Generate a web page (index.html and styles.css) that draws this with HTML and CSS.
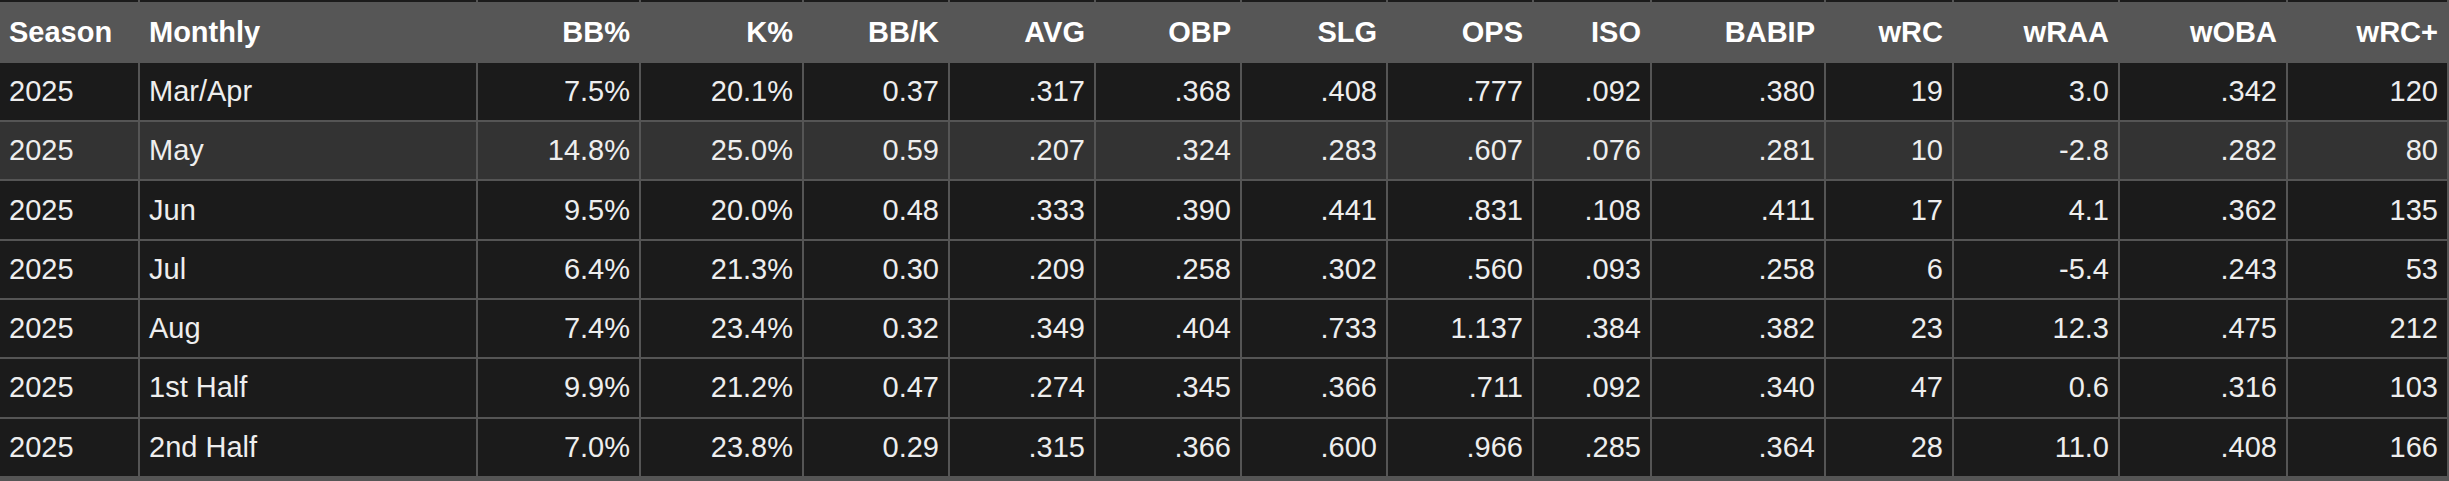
FILE: index.html
```html
<!DOCTYPE html>
<html lang="en">
<head>
    <meta charset="UTF-8">
    <meta name="viewport" content="width=device-width, initial-scale=1.0">
    <title>Monthly Splits</title>
    <link rel="stylesheet" href="styles.css">
</head>
<body>
    <div class="wrap">
        <table class="splits">
            <colgroup>
                <col class="c-season">
                <col class="c-split">
                <col class="c-pct">
                <col class="c-pct">
                <col class="c-rate">
                <col class="c-rate">
                <col class="c-rate">
                <col class="c-rate">
                <col class="c-rate">
                <col class="c-iso">
                <col class="c-babip">
                <col class="c-wrc">
                <col class="c-wraa">
                <col class="c-woba">
                <col class="c-wrcplus">
            </colgroup>
            <thead>
                <!-- bottom edge of the row above, cut off -->
                <tr class="cut">
                    <td></td><td></td><td></td><td></td><td></td><td></td><td></td><td></td>
                    <td></td><td></td><td></td><td></td><td></td><td></td><td></td>
                </tr>
                <tr class="head">
                    <th class="left">Season</th>
                    <th class="left">Monthly</th>
                    <th>BB%</th>
                    <th>K%</th>
                    <th>BB/K</th>
                    <th>AVG</th>
                    <th>OBP</th>
                    <th>SLG</th>
                    <th>OPS</th>
                    <th>ISO</th>
                    <th>BABIP</th>
                    <th>wRC</th>
                    <th>wRAA</th>
                    <th>wOBA</th>
                    <th>wRC+</th>
                </tr>
            </thead>
            <tbody>
                <tr>
                    <td class="left">2025</td><td class="left">Mar/Apr</td>
                    <td>7.5%</td><td>20.1%</td><td>0.37</td><td>.317</td><td>.368</td><td>.408</td>
                    <td>.777</td><td>.092</td><td>.380</td><td>19</td><td>3.0</td><td>.342</td><td>120</td>
                </tr>
                <tr class="hover">
                    <td class="left">2025</td><td class="left">May</td>
                    <td>14.8%</td><td>25.0%</td><td>0.59</td><td>.207</td><td>.324</td><td>.283</td>
                    <td>.607</td><td>.076</td><td>.281</td><td>10</td><td>-2.8</td><td>.282</td><td>80</td>
                </tr>
                <tr>
                    <td class="left">2025</td><td class="left">Jun</td>
                    <td>9.5%</td><td>20.0%</td><td>0.48</td><td>.333</td><td>.390</td><td>.441</td>
                    <td>.831</td><td>.108</td><td>.411</td><td>17</td><td>4.1</td><td>.362</td><td>135</td>
                </tr>
                <tr>
                    <td class="left">2025</td><td class="left">Jul</td>
                    <td>6.4%</td><td>21.3%</td><td>0.30</td><td>.209</td><td>.258</td><td>.302</td>
                    <td>.560</td><td>.093</td><td>.258</td><td>6</td><td>-5.4</td><td>.243</td><td>53</td>
                </tr>
                <tr>
                    <td class="left">2025</td><td class="left">Aug</td>
                    <td>7.4%</td><td>23.4%</td><td>0.32</td><td>.349</td><td>.404</td><td>.733</td>
                    <td>1.137</td><td>.384</td><td>.382</td><td>23</td><td>12.3</td><td>.475</td><td>212</td>
                </tr>
                <tr>
                    <td class="left">2025</td><td class="left">1st Half</td>
                    <td>9.9%</td><td>21.2%</td><td>0.47</td><td>.274</td><td>.345</td><td>.366</td>
                    <td>.711</td><td>.092</td><td>.340</td><td>47</td><td>0.6</td><td>.316</td><td>103</td>
                </tr>
                <tr>
                    <td class="left">2025</td><td class="left">2nd Half</td>
                    <td>7.0%</td><td>23.8%</td><td>0.29</td><td>.315</td><td>.366</td><td>.600</td>
                    <td>.966</td><td>.285</td><td>.364</td><td>28</td><td>11.0</td><td>.408</td><td>166</td>
                </tr>
            </tbody>
        </table>
    </div>
</body>
</html>
```

FILE: styles.css
```css
body {
    margin: 0;
    background-color: #555555;
    font-family: "Liberation Sans", Arial, sans-serif;
}
.wrap {
    width: 2449px;
    height: 481px;
    overflow: hidden;
    background-color: #555555;
}
.splits {
    width: 2449px;
    table-layout: fixed;
    border-collapse: separate;
    border-spacing: 0;
    font-size: 29px;
    color: #eeeeee;
}
.c-season { width: 140px; }
.c-split { width: 338px; }
.c-pct { width: 163px; }
.c-rate { width: 146px; }
.c-iso { width: 118px; }
.c-babip { width: 174px; }
.c-wrc { width: 128px; }
.c-wraa { width: 166px; }
.c-woba { width: 168px; }
.c-wrcplus { width: 161px; }

.splits th,
.splits td {
    padding: 0 9px;
    text-align: right;
    vertical-align: middle;
    white-space: nowrap;
    border-right: 2px solid #555555;
    border-bottom: 2px solid #555555;
}
.splits .left {
    text-align: left;
}
.splits tr.cut td {
    height: 2px;
    padding: 0;
    border-bottom: none;
    background-color: #1b1b1b;
}
.splits tr.head th {
    height: 60.7px;
    border-right-color: #565656;
    border-bottom: none;
    background-color: #565656;
    color: #ffffff;
    font-weight: bold;
}
.splits tbody td {
    height: 57.33px;
    background-color: #1b1b1b;
}
.splits tbody tr.hover td {
    background-color: #333333;
}
```
